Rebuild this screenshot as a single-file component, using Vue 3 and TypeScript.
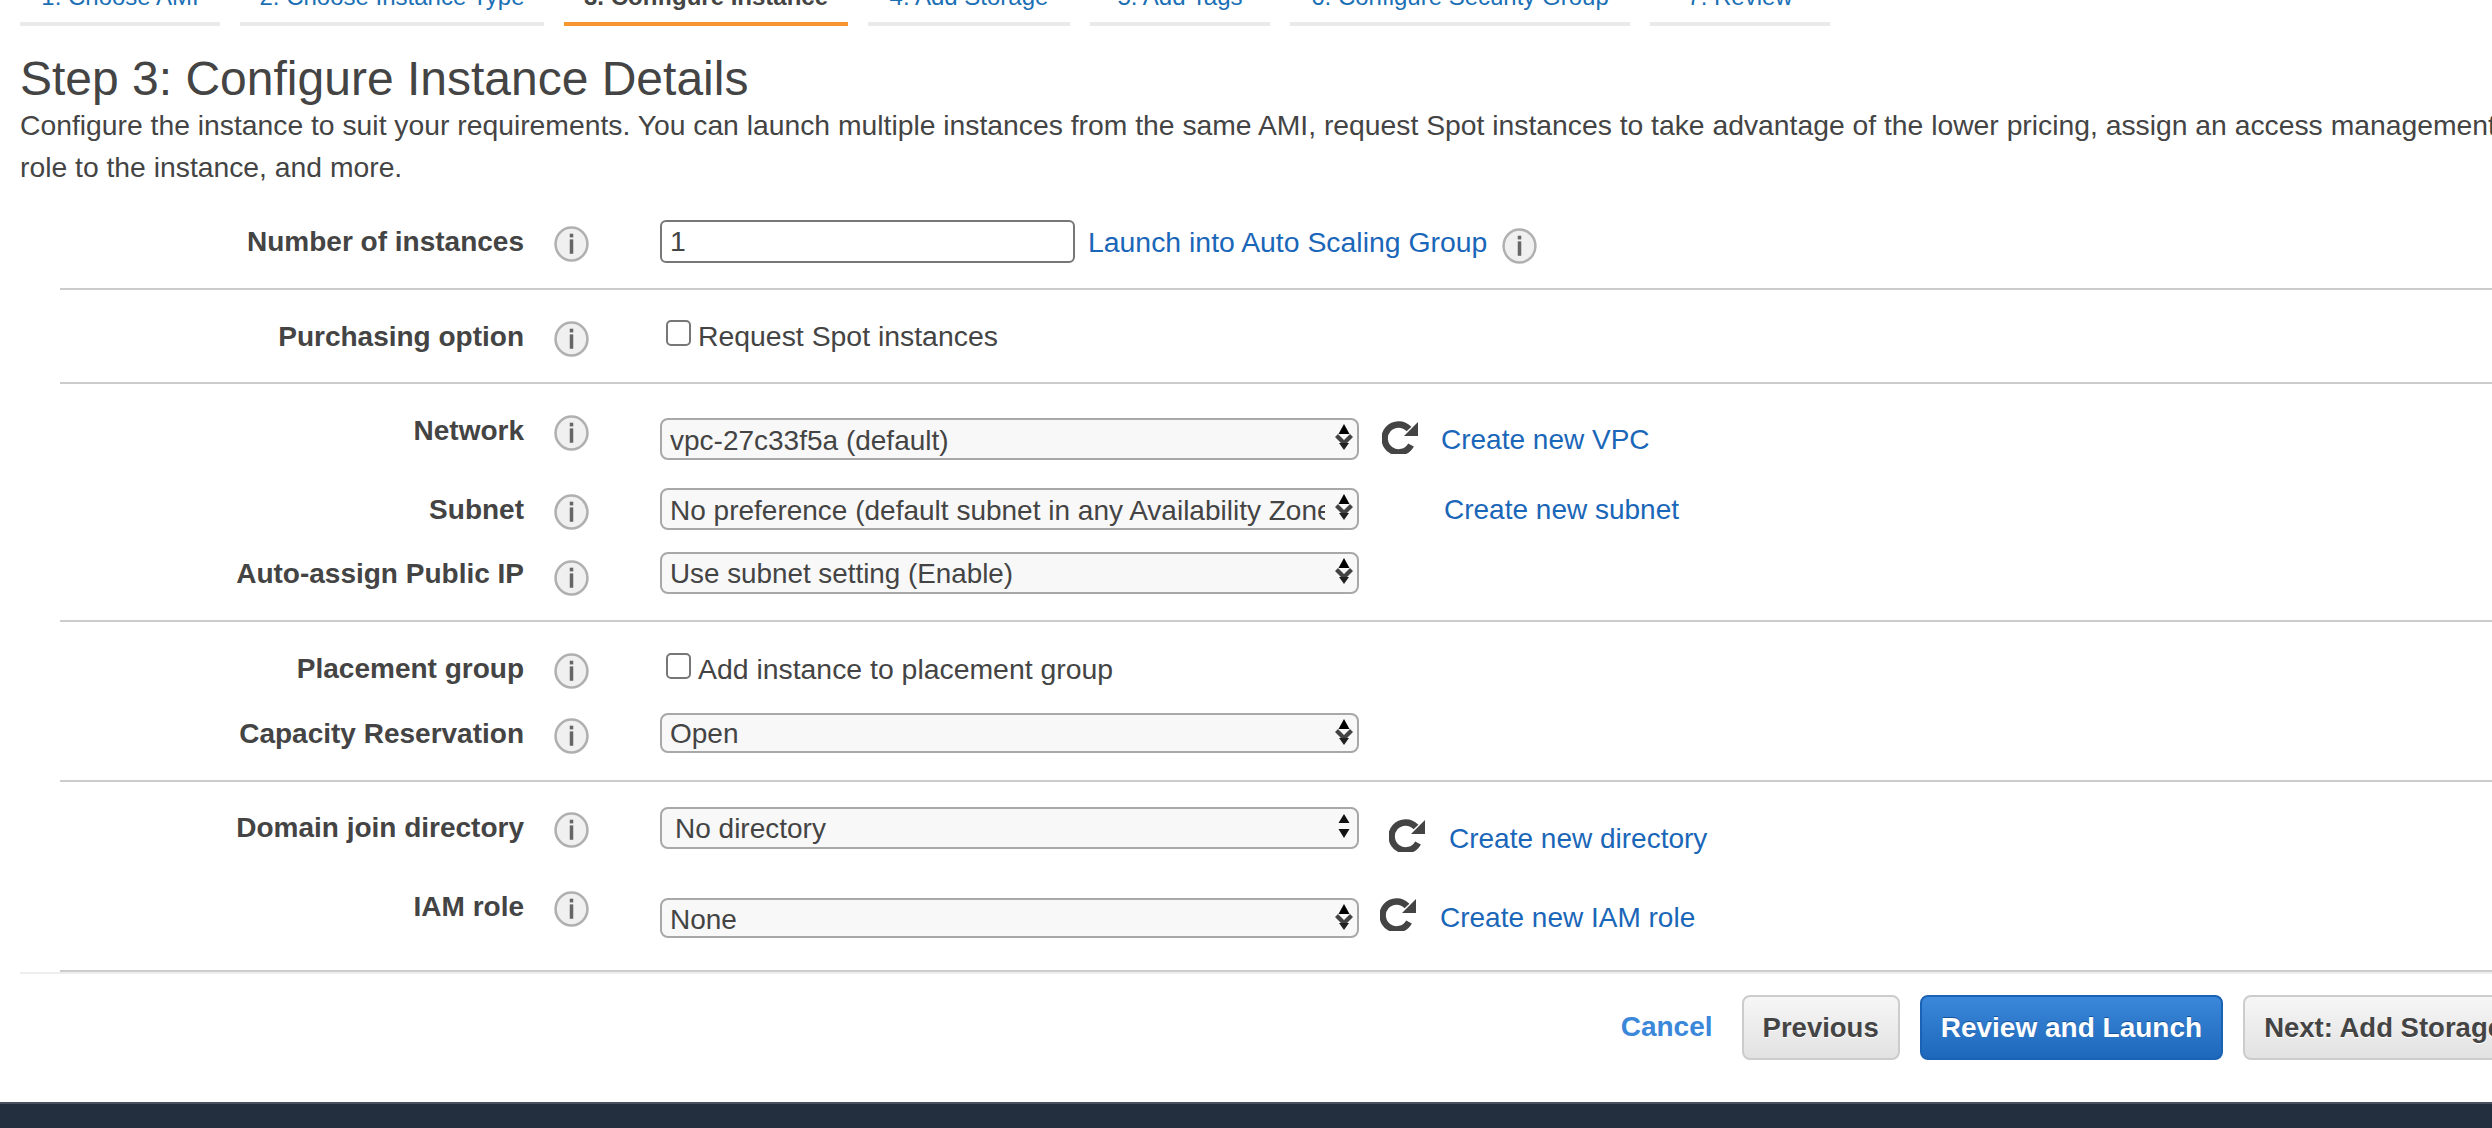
<script setup lang="ts">
interface Row {
  key: string
  label: string
  kind: 'number' | 'check' | 'select'
  value: string
  link?: string
  refresh?: boolean
  info?: boolean
}

const tabs = [
  { name: '1. Choose AMI', width: 200 },
  { name: '2. Choose Instance Type', width: 304 },
  { name: '3. Configure Instance', width: 284, active: true },
  { name: '4. Add Storage', width: 202 },
  { name: '5. Add Tags', width: 180 },
  { name: '6. Configure Security Group', width: 340 },
  { name: '7. Review', width: 180 },
]

const sections: Row[][] = [
  [{ key: 'number', label: 'Number of instances', kind: 'number', value: '1', link: 'Launch into Auto Scaling Group', info: true }],
  [{ key: 'purchasing', label: 'Purchasing option', kind: 'check', value: 'Request Spot instances' }],
  [
    { key: 'network', label: 'Network', kind: 'select', value: 'vpc-27c33f5a (default)', link: 'Create new VPC', refresh: true },
    { key: 'subnet', label: 'Subnet', kind: 'select', value: 'No preference (default subnet in any Availability Zone)', link: 'Create new subnet' },
    { key: 'auto', label: 'Auto-assign Public IP', kind: 'select', value: 'Use subnet setting (Enable)' },
  ],
  [
    { key: 'placement', label: 'Placement group', kind: 'check', value: 'Add instance to placement group' },
    { key: 'capacity', label: 'Capacity Reservation', kind: 'select', value: 'Open' },
  ],
  [
    { key: 'domain', label: 'Domain join directory', kind: 'select', value: 'No directory', link: 'Create new directory', refresh: true },
    { key: 'iam', label: 'IAM role', kind: 'select', value: 'None', link: 'Create new IAM role', refresh: true },
  ],
]
</script>

<template>
  <div class="page">
    <nav class="tabs">
      <a
        v-for="tab in tabs"
        :key="tab.name"
        class="tab"
        :class="{ active: tab.active }"
        :style="{ width: `${tab.width}px` }"
      >{{ tab.name }}</a>
    </nav>

    <main class="main">
      <h1 class="title">Step 3: Configure Instance Details</h1>
      <p class="intro">
        Configure the instance to suit your requirements. You can launch multiple instances from the same AMI, request Spot instances to take advantage of the lower pricing, assign an access management role to the instance, and more.
      </p>

      <div class="form">
        <section v-for="(rows, i) in sections" :key="i" class="section" :class="`section-${i + 1}`">
          <div v-for="row in rows" :key="row.key" class="row" :class="`row-${row.key}`">
            <label class="label">{{ row.label }}</label>
            <span class="info-cell">
              <svg class="info" viewBox="0 0 34 35"><ellipse cx="17" cy="17.5" rx="15.5" ry="16" fill="#f0f0f0" stroke="#b0b0b0" stroke-width="2.5" /><rect x="15.3" y="7.5" width="3.4" height="3.6" fill="#666" /><rect x="15.3" y="13" width="3.4" height="14" fill="#666" /></svg>
            </span>
            <div class="control">
              <input v-if="row.kind === 'number'" class="text-input" type="text" :value="row.value" />

              <label v-else-if="row.kind === 'check'" class="check">
                <input type="checkbox" class="checkbox" />
                <span>{{ row.value }}</span>
              </label>

              <div v-else class="select-wrap">
                <select class="select">
                  <option>{{ row.value }}</option>
                </select>
                <svg v-if="row.key === 'domain'" class="arrows" viewBox="0 0 20 26"><path d="M10 1l5.5 9h-11zM10 25l-5.5-9h11z" fill="#111" /></svg>
                <svg v-else class="arrows" viewBox="0 0 20 26"><path d="M1 13l3-3 6 6 6-6 3 3-9 9z" fill="#444" /><path d="M10 0l5.5 10h-11z" fill="#000" /><path d="M10 26l-5-7h10z" fill="#222" /></svg>
              </div>

              <svg v-if="row.refresh" class="refresh" viewBox="0 0 36 34"><path d="M29 25a14 14 0 1 1-2-16" fill="none" stroke="#444" stroke-width="6.5" /><path d="M36 2v14H22z" fill="#444" /></svg>
              <a v-if="row.link" class="link">{{ row.link }}</a>
              <svg v-if="row.info" class="info info-after" viewBox="0 0 34 35"><ellipse cx="17" cy="17.5" rx="15.5" ry="16" fill="#f0f0f0" stroke="#b0b0b0" stroke-width="2.5" /><rect x="15.3" y="7.5" width="3.4" height="3.6" fill="#666" /><rect x="15.3" y="13" width="3.4" height="14" fill="#666" /></svg>
            </div>
          </div>
        </section>
      </div>

      <div class="actions">
        <a class="cancel">Cancel</a>
        <button class="btn">Previous</button>
        <button class="btn btn-primary">Review and Launch</button>
        <button class="btn">Next: Add Storage</button>
      </div>
    </main>

    <footer class="footer">
      <span class="feedback">Feedback</span>
    </footer>
  </div>
</template>

<style scoped>
.page {
  width: 2540px;
  font-family: "Liberation Sans", Arial, sans-serif;
  font-size: 28.4px;
  color: #444;
}

.tabs {
  display: flex;
  gap: 20px;
  margin-top: -21px;
  padding-left: 20px;
}

.tab {
  box-sizing: border-box;
  padding-bottom: 7px;
  font-size: 24px;
  line-height: 36px;
  text-align: center;
  color: #1a6fb5;
  border-bottom: 4px solid #eaeaea;
}

.tab.active {
  font-weight: bold;
  color: #444;
  border-bottom-color: #f7962d;
}

.main {
  padding: 0 16px 0 20px;
}

.title {
  margin: 28px 0 0;
  font-size: 48px;
  font-weight: normal;
  line-height: 50px;
}

.intro {
  margin: 0;
  font-size: 28.3px;
  line-height: 42px;
}

.form {
  margin: 7px 0 0 40px;
}

.section {
  padding-top: 26px;
  padding-bottom: 25px;
  border-bottom: 2px solid #ccc;
}

.section-2 {
  padding-bottom: 24px;
}

.section-5 {
  padding-top: 25px;
  padding-bottom: 42px;
}

.row {
  display: grid;
  grid-template-columns: 464px 136px 1fr;
  align-items: start;
  height: 42px;
}

.row-network,
.row-domain {
  height: 79px;
}

.row-subnet {
  height: 64px;
}

.row-placement {
  height: 65px;
}

.label {
  font-size: 28px;
  font-weight: bold;
  line-height: 42px;
  text-align: right;
}

.info-cell {
  display: block;
  padding: 5px 0 0 30px;
}

.row-auto .info-cell {
  padding-top: 7px;
}

.info {
  display: block;
  width: 35px;
  height: 36px;
}

.info-after {
  margin: 8px 0 0 15px;
}

.control {
  display: flex;
  align-items: flex-start;
}

.row-number .control,
.row-subnet .control,
.row-auto .control {
  margin-top: -1px;
}

.row-network .control {
  margin-top: 8px;
}

.row-iam .control {
  margin-top: 12px;
}

.text-input {
  box-sizing: border-box;
  width: 415px;
  height: 43px;
  margin: 0;
  padding: 0 8px;
  font: inherit;
  color: #444;
  background: #fff;
  border: 2px solid #777;
  border-radius: 6px;
  outline: none;
}

.check {
  display: flex;
  line-height: 42px;
}

.row-purchasing .check span {
  margin-top: -1px;
}

.checkbox {
  appearance: none;
  box-sizing: border-box;
  width: 25px;
  height: 26px;
  margin: 4px 7px 0 6px;
  background: #fff;
  border: 2px solid #777;
  border-radius: 5px;
}

.row-placement .checkbox {
  margin-top: 5px;
}

.select-wrap {
  position: relative;
  width: 699px;
  height: 42px;
}

.row-capacity .select-wrap,
.row-iam .select-wrap {
  height: 40px;
}

.select {
  appearance: none;
  box-sizing: border-box;
  display: block;
  width: 100%;
  height: 100%;
  margin: 0;
  padding: 2px 32px 0 8px;
  font: inherit;
  font-size: 28px;
  color: #444;
  background: #f8f8f8;
  border: 2px solid #a8a8a8;
  border-radius: 8px;
  outline: none;
}

.row-auto .select {
  font-size: 27.8px;
}

.row-capacity .select,
.row-auto .select,
.row-domain .select {
  padding-top: 0;
}

.row-domain .select {
  padding-left: 13px;
}

.arrows {
  position: absolute;
  top: 6px;
  right: 5px;
  width: 20px;
  height: 26px;
}

.refresh {
  flex: none;
  width: 36px;
  height: 34px;
}

.link {
  font-size: 28px;
  line-height: 42px;
  color: #1a66b8;
}

.row-number .link {
  margin: 1px 0 0 13px;
  font-size: 28.4px;
}

.row-network .refresh {
  margin: 2px 23px 0 23px;
}

.row-network .link {
  margin-top: 1px;
}

.row-subnet .link {
  margin: 1px 0 0 85px;
}

.row-domain .refresh {
  margin: 11px 24px 0 30px;
}

.row-domain .link {
  margin-top: 11px;
}

.row-iam .refresh {
  margin: -1px 24px 0 21px;
}

.row-iam .link {
  margin-top: -1px;
}

.actions {
  display: flex;
  justify-content: flex-end;
  align-items: center;
  gap: 20px;
  height: 130px;
  padding-bottom: 22px;
  box-sizing: border-box;
  border-top: 2px solid #eee;
}

.cancel {
  margin-right: 9px;
  font-size: 28px;
  font-weight: bold;
  color: #3b87d9;
}

.btn {
  box-sizing: border-box;
  height: 65px;
  padding: 2px 19px 0;
  font-family: inherit;
  font-size: 27.5px;
  font-weight: bold;
  color: #444;
  text-shadow: 0 1px 0 #fff;
  background: linear-gradient(#f6f6f6, #e2e2e2);
  border: 2px solid #ccc;
  border-radius: 8px;
}

.btn-primary {
  font-size: 28px;
  color: #fff;
  text-shadow: 0 -1px 0 #15539c;
  background: linear-gradient(#3b87d9, #1d68ba);
  border-color: #1a62b3;
}

.footer {
  box-sizing: border-box;
  height: 60px;
  padding: 21px 0 0 235px;
  background: #232f3e;
  border-top: 2px solid #4a5260;
}

.feedback {
  display: block;
  font-size: 24px;
  line-height: 30px;
  color: #d5dbdb;
}
</style>

<style>
html,
body {
  overflow: hidden;
  background: #fff;
}
</style>
